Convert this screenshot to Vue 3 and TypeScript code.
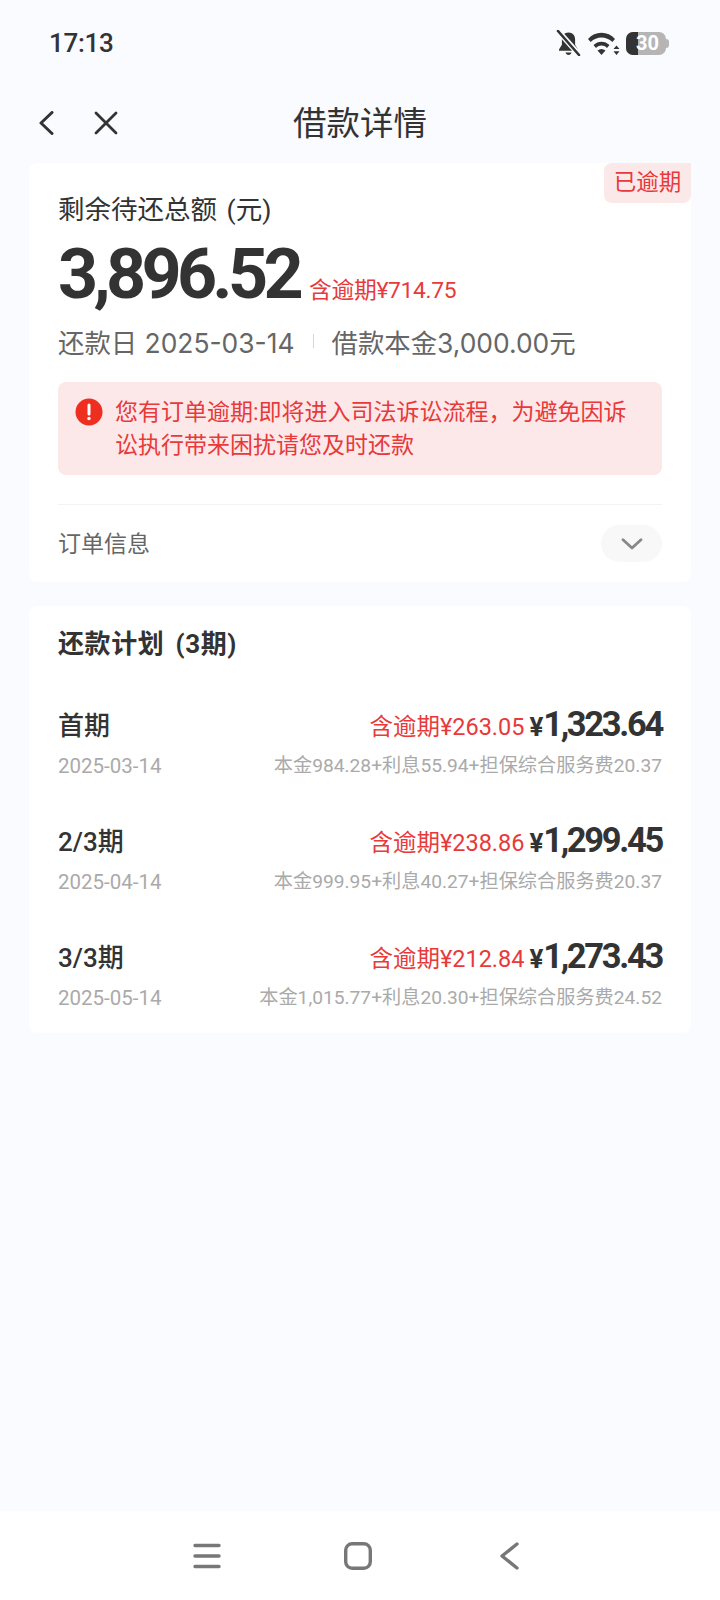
<script setup lang="ts">
interface Plan {
  name: string
  date: string
  overdue: string
  amount: string
  detail: string
}
const plans: Plan[] = [
  { name: '首期', date: '2025-03-14', overdue: '含逾期¥263.05', amount: '1,323.64', detail: '本金984.28+利息55.94+担保综合服务费20.37' },
  { name: '2/3期', date: '2025-04-14', overdue: '含逾期¥238.86', amount: '1,299.45', detail: '本金999.95+利息40.27+担保综合服务费20.37' },
  { name: '3/3期', date: '2025-05-14', overdue: '含逾期¥212.84', amount: '1,273.43', detail: '本金1,015.77+利息20.30+担保综合服务费24.52' },
]
</script>

<template>
  <div class="page">
    <header class="status">
      <span class="time">17:13</span>
      <div class="status-icons">
        <svg width="25" height="26" viewBox="0 0 25 26">
          <path d="M12.5 2.5c-4.2 0-6.6 3-6.6 7v5.2L3 19.6v1.2h19v-1.2l-2.9-4.9V9.500c0-4-2.400-7-6.600-7z" fill="#333" />
          <path d="M9.500 22.500h6c-.4 1.600-1.500 2.500-3 2.500s-2.600-.9-3-2.500z" fill="#333" />
          <path d="M2.500 1.500 23 24.500" stroke="#fafbff" stroke-width="5.500" />
          <path d="M2 1 23 25" stroke="#333" stroke-width="2.600" stroke-linecap="round" />
        </svg>
        <svg class="ic-wifi" width="32" height="23" viewBox="0 0 32 23">
          <path d="M0 7C7-1.500 20-1.500 27 7l-2.700 3C18.500 4 8.500 4 2.700 10z" fill="#333" />
          <path d="M5.500 13C10 8.500 17 8.500 21.500 13L19 16c-3.500-3.200-7.500-3.200-11 0z" fill="#333" />
          <path d="M13.500 23l-4-4.500c2.500-2 5.500-2 8 0z" fill="#333" />
          <path d="M28.500 13.500l3 3.500h-6zM28.500 23l3-3.800h-6z" fill="#333" />
        </svg>
        <div class="battery">
          <div class="battery-body">
            <div class="battery-dark"></div>
            <span class="battery-num">30</span>
          </div>
          <div class="battery-cap"></div>
        </div>
      </div>
    </header>

    <nav class="titlebar">
      <div class="title-actions">
        <svg width="16" height="24" viewBox="0 0 16 24"><path d="M14 1.500 3 12l11 10.500" fill="none" stroke="#333" stroke-width="3" stroke-linecap="round" stroke-linejoin="round" /></svg>
        <svg width="26" height="24" viewBox="0 0 26 24"><path d="M3 2 23 22M23 2 3 22" fill="none" stroke="#333" stroke-width="2.800" stroke-linecap="round" /></svg>
      </div>
      <h1 class="title">借款详情</h1>
    </nav>

    <section class="card summary">
      <span class="badge">已逾期</span>
      <div class="label">剩余待还总额 (元)</div>
      <div class="total-row">
        <span class="total">3,896.52</span>
        <span class="total-overdue">含逾期¥714.75</span>
      </div>
      <div class="meta">
        <span>还款日 2025-03-14</span>
        <i class="meta-sep"></i>
        <span>借款本金3,000.00元</span>
      </div>
      <div class="alert">
        <svg class="alert-icon" width="28" height="28" viewBox="0 0 28 28">
          <circle cx="14" cy="14" r="13.500" fill="#ee2e1f" />
          <path d="M14 7v9" stroke="#fff" stroke-width="3" stroke-linecap="round" />
          <circle cx="14" cy="20.500" r="1.700" fill="#fff" />
        </svg>
        <p class="alert-text">您有订单逾期:即将进入司法诉讼流程，为避免因诉讼执行带来困扰请您及时还款</p>
      </div>
      <div class="order">
        <span class="order-label">订单信息</span>
        <span class="order-toggle">
          <svg width="22" height="12" viewBox="0 0 22 12"><path d="M2 1.800 11 10l9-8.200" fill="none" stroke="#888" stroke-width="2.800" stroke-linecap="round" stroke-linejoin="round" /></svg>
        </span>
      </div>
    </section>

    <section class="card plan">
      <h2 class="plan-title">还款计划 (3期)</h2>
      <div v-for="p in plans" :key="p.name" class="plan-item">
        <div class="plan-top">
          <span class="plan-name">{{ p.name }}</span>
          <span class="plan-overdue">{{ p.overdue }}</span>
          <span class="plan-amount"><span class="yen">¥</span>{{ p.amount }}</span>
        </div>
        <div class="plan-bottom">
          <span class="plan-date">{{ p.date }}</span>
          <span class="plan-detail">{{ p.detail }}</span>
        </div>
      </div>
    </section>

    <footer class="navbar">
      <svg width="28" height="26" viewBox="0 0 28 26"><path d="M2 2.500h24M2 13h24M2 23.500h24" stroke="#777" stroke-width="3.400" stroke-linecap="round" /></svg>
      <svg width="28" height="28" viewBox="0 0 28 28"><rect x="1.700" y="1.700" width="24.600" height="24.600" rx="6.500" fill="none" stroke="#777" stroke-width="3.400" /></svg>
      <svg width="26" height="28" viewBox="0 0 26 28"><path d="M23 2 8 14l15 12" fill="none" stroke="#777" stroke-width="3.400" stroke-linecap="round" stroke-linejoin="round" /></svg>
    </footer>
  </div>
</template>

<style>
html, body { margin: 0; padding: 0; background: #fafbff; }
</style>

<style scoped>
.page {
  width: 720px;
  height: 1600px;
  display: flex;
  flex-direction: column;
  background: #fafbff;
  font-family: Roboto, "Noto Sans CJK SC", sans-serif;
  color: #333;
  overflow: hidden;
}
.status {
  height: 86px;
  padding: 0 51px 0 49px;
  display: flex;
  align-items: center;
  justify-content: space-between;
}
.time { font-size: 26px; font-weight: 500; letter-spacing: -0.3px; color: #333; }
.status-icons { display: flex; align-items: center; }
.ic-wifi { margin-left: 7px; }
.battery { display: flex; align-items: center; margin-left: 6px; }
.battery-body {
  position: relative;
  width: 40px;
  height: 23px;
  border-radius: 7px;
  background: #b5b5b5;
  overflow: hidden;
}
.battery-dark { position: absolute; left: 0; top: 0; bottom: 0; width: 12px; background: #333; }
.battery-num {
  position: absolute;
  left: 10px;
  top: 0;
  line-height: 23px;
  font-size: 20px;
  font-weight: 700;
  color: #fff;
}
.battery-cap { width: 3px; height: 9px; background: #b5b5b5; border-radius: 0 3px 3px 0; }
.titlebar {
  position: relative;
  height: 77px;
  display: flex;
  align-items: center;
  justify-content: center;
}
.title-actions {
  position: absolute;
  left: 38px;
  top: 25px;
  display: flex;
  gap: 39px;
}
.title { margin: 0; font-size: 33.500px; font-weight: 400; color: #333; line-height: 44px; position: relative; top: -1px; }
.card {
  position: relative;
  margin: 0 29px;
  background: #fff;
  border-radius: 8px;
  padding: 0 29px;
}
.summary { height: 419px; box-sizing: border-box; padding-top: 29px; }
.badge {
  position: absolute;
  top: 0;
  right: 0;
  width: 87px;
  height: 40px;
  box-sizing: border-box;
  text-align: center;
  line-height: 39px;
  font-size: 22.500px;
  color: #e8393b;
  background: #fbe8e8;
  border-radius: 8px 0 8px 8px;
}
.label { font-size: 26.500px; line-height: 36px; color: #333; word-spacing: 3px; }
.total-row { display: flex; align-items: baseline; margin-top: 11px; height: 70px; }
.total { font-size: 70px; font-weight: 700; line-height: 70px; letter-spacing: -4.700px; color: #333; }
.total-overdue { margin-left: 10px; font-size: 22.800px; color: #e8393b; letter-spacing: -0.3px; }
.meta {
  display: flex;
  align-items: center;
  margin-top: 12px;
  height: 40px;
  font-family: Inter, "Noto Sans CJK SC", sans-serif;
  font-size: 26.400px;
  color: #666;
}
.meta-sep { width: 1px; height: 14px; background: #d5d5d5; margin: 0 18px; }
.alert {
  margin-top: 21px;
  height: 93px;
  box-sizing: border-box;
  padding: 14px 30px 0 17px;
  display: flex;
  background: #fce8e8;
  border-radius: 8px;
}
.alert-icon { flex: none; margin-top: 2px; }
.alert-text { margin: 0 0 0 12px; font-size: 23px; line-height: 33px; color: #e8393b; }
.order {
  margin-top: 29px;
  height: 75px;
  border-top: 1px solid #f3f3f3;
  display: flex;
  align-items: center;
  justify-content: space-between;
}
.order-label { font-size: 23px; color: #666; position: relative; top: -1px; }
.order-toggle {
  width: 61px;
  height: 37px;
  margin-top: 2px;
  border-radius: 19px;
  background: #f8f8f8;
  display: flex;
  align-items: center;
  justify-content: center;
}
.plan { margin-top: 24px; height: 427px; box-sizing: border-box; padding-top: 20px; }
.plan-title { margin: 0; font-size: 26px; line-height: 36px; font-weight: 700; color: #333; letter-spacing: 0.6px; word-spacing: 4px; }
.plan-item { margin-top: 40px; height: 76px; }
.plan-item + .plan-item { margin-top: 40px; }
.plan-top { display: flex; align-items: baseline; height: 44px; line-height: 44px; }
.plan-name { font-size: 26px; font-weight: 500; color: #333; margin-right: auto; position: relative; top: -1px; }
.plan-overdue { font-size: 23.500px; color: #e8393b; position: relative; top: -1px; }
.plan-amount { margin-left: 5px; font-size: 34.500px; font-weight: 700; letter-spacing: -2.300px; color: #333; }
.yen { font-size: 26px; margin-right: 2px; }
.plan-bottom {
  margin-top: 6px;
  display: flex;
  justify-content: space-between;
  line-height: 28px;
  color: #aaa;
}
.plan-date { font-size: 20.500px; }
.plan-detail { font-size: 19.200px; }
.navbar {
  margin-top: auto;
  height: 89px;
  box-sizing: border-box;
  padding: 0 200px 0 193px;
  background: #fff;
  display: flex;
  align-items: center;
  justify-content: space-between;
}
</style>
